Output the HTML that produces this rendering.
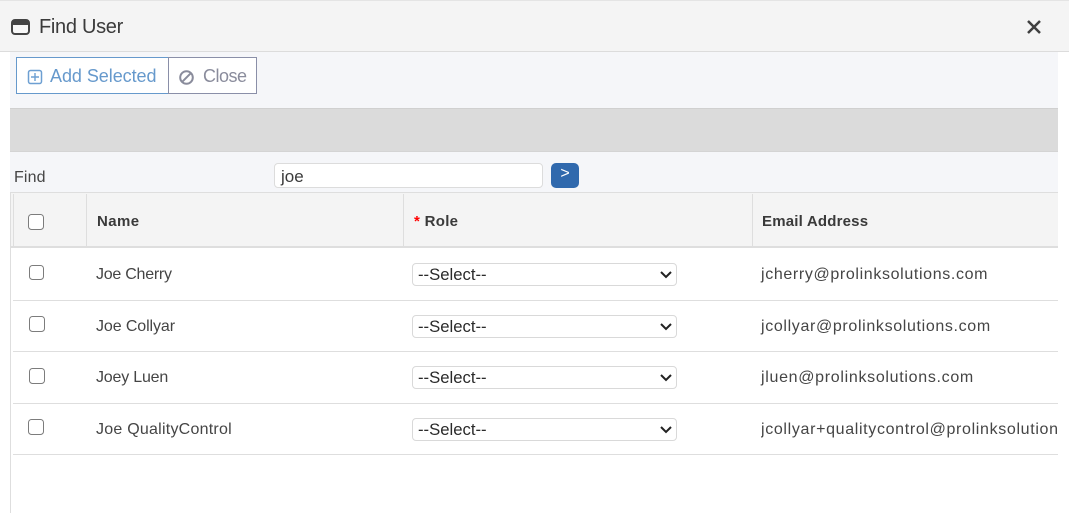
<!DOCTYPE html>
<html>
<head>
<meta charset="utf-8">
<style>
html,body{margin:0;padding:0;width:1069px;height:513px;overflow:hidden;background:#fff}
body{position:relative;font-family:"Liberation Sans",sans-serif;color:#3d3d3d}
.a{position:absolute;white-space:nowrap}
.t{font-size:16px;line-height:20px;color:#454545}
.b{font-size:15px;line-height:20px;font-weight:bold;color:#3a3a3a}
.cb{position:absolute;box-sizing:border-box;width:16px;height:16px;border:1.5px solid #7c7c7c;border-radius:3.5px;background:#fff}
.sel{position:absolute;left:412px;width:265px;height:23px;box-sizing:border-box;border:1px solid #d9d9d9;border-radius:4px;background:#fff;font-size:16.7px;line-height:22px;color:#2a2a2a;padding-left:5px}
.sel svg{position:absolute;right:3px;top:6px}
.line{position:absolute;left:13px;width:1045px;height:1px;background:#dedede}
</style>
</head>
<body>
<div class="a" style="left:0;top:0;width:1069px;height:52px;box-sizing:border-box;background:#f4f4f4;border-top:1px solid #e4e4e4;border-bottom:1px solid #dcdcdc"></div>
<svg class="a" style="left:11px;top:19px" width="19" height="16" viewBox="0 0 19 16"><rect x="1" y="1" width="17" height="14" rx="3" fill="#f8f8f8" stroke="#444" stroke-width="2"/><rect x="1" y="1" width="17" height="5" rx="1.5" fill="#444"/></svg>
<div class="a" style="left:39px;top:15px;font-size:20px;line-height:24px;color:#3b3b3b;letter-spacing:-.3px">Find User</div>
<svg class="a" style="left:1026px;top:19px" width="16" height="16" viewBox="0 0 16 16"><path d="M2 2L14 14M14 2L2 14" stroke="#3f3f3f" stroke-width="2.5" fill="none"/></svg>

<div class="a" style="left:10px;top:52px;width:1048px;height:56px;background:#f5f6f9"></div>
<div class="a" style="left:16px;top:57px;width:153px;height:37px;box-sizing:border-box;border:1px solid #6699cc;background:#fff"></div>
<div class="a" style="left:168px;top:57px;width:89px;height:37px;box-sizing:border-box;border:1px solid #8a8fa8;background:#fff"></div>
<svg class="a" style="left:27px;top:69px" width="16" height="16" viewBox="0 0 16 16"><rect x="1.5" y="1.5" width="13" height="13" rx="2" fill="none" stroke="#6d9fd2" stroke-width="1.5"/><path d="M8 4v8M4 8h8" stroke="#6d9fd2" stroke-width="1.4"/></svg>
<div class="a" style="left:50px;top:65px;font-size:18px;line-height:22px;color:#6699cc;letter-spacing:-.05px">Add Selected</div>
<svg class="a" style="left:178px;top:69px" width="17" height="17" viewBox="0 0 17 17"><circle cx="8.5" cy="8.5" r="6.3" fill="none" stroke="#8a8c9c" stroke-width="2"/><path d="M4.2 12.8L12.8 4.2" stroke="#8a8c9c" stroke-width="2"/></svg>
<div class="a" style="left:203px;top:65px;font-size:18px;line-height:22px;color:#8a8c9c;letter-spacing:-.5px">Close</div>

<div class="a" style="left:10px;top:108px;width:1048px;height:44px;box-sizing:border-box;background:#dbdbdb;border-top:1px solid #d0d0d0;border-bottom:1px solid #d4d4d4"></div>
<div class="a" style="left:10px;top:152px;width:1048px;height:40px;background:#f5f6f9"></div>
<div class="a t" style="left:14px;top:168px;letter-spacing:.15px">Find</div>
<div class="a" style="left:274px;top:163px;width:269px;height:25px;box-sizing:border-box;border:1px solid #dcdcdc;border-radius:4px;background:#fff;font-size:17px;line-height:25px;padding-left:6px;color:#3a3a3a">joe</div>
<div class="a" style="left:551px;top:163px;width:28px;height:25px;border-radius:5px;background:#3069ad;color:#fff;font-size:16px;line-height:22px;text-align:center">&gt;</div>

<div class="a" style="left:11px;top:192px;width:1047px;height:56px;box-sizing:border-box;background:#f4f4f4;border-top:1px solid #dedede;border-bottom:2px solid #dedede"></div>
<div class="a" style="left:10px;top:192px;width:1px;height:321px;background:#dedede"></div>
<div class="a" style="left:13px;top:194px;width:1px;height:52px;background:#dedede"></div>
<div class="a" style="left:86px;top:194px;width:1px;height:52px;background:#dedede"></div>
<div class="a" style="left:403px;top:194px;width:1px;height:52px;background:#dedede"></div>
<div class="a" style="left:752px;top:194px;width:1px;height:52px;background:#dedede"></div>
<div class="cb" style="left:28px;top:214px"></div>
<div class="a b" style="left:97px;top:212px;letter-spacing:.4px">Name</div>
<div class="a b" style="left:414px;top:212px;letter-spacing:.3px"><span style="color:#f00">*</span> Role</div>
<div class="a b" style="left:762px;top:212px;letter-spacing:.2px">Email Address</div>

<div class="line" style="top:300px"></div>
<div class="line" style="top:351px"></div>
<div class="line" style="top:403px"></div>
<div class="line" style="top:454px"></div>

<div class="cb" style="left:29px;top:265px;width:15px;height:15px"></div>
<div class="a t" style="left:96px;top:265px;letter-spacing:-.25px">Joe Cherry</div>
<div class="sel" style="top:263px">--Select--<svg width="14" height="10" viewBox="0 0 14 10"><path d="M2 2l5 5 5-5" stroke="#222" stroke-width="2" fill="none"/></svg></div>
<div class="a t" style="left:761px;top:265px;letter-spacing:.64px">jcherry@prolinksolutions.com</div>

<div class="cb" style="left:29px;top:316px"></div>
<div class="a t" style="left:96px;top:317px;letter-spacing:-.1px">Joe Collyar</div>
<div class="sel" style="top:315px">--Select--<svg width="14" height="10" viewBox="0 0 14 10"><path d="M2 2l5 5 5-5" stroke="#222" stroke-width="2" fill="none"/></svg></div>
<div class="a t" style="left:761px;top:317px;letter-spacing:.65px">jcollyar@prolinksolutions.com</div>

<div class="cb" style="left:29px;top:368px"></div>
<div class="a t" style="left:96px;top:368px;letter-spacing:-.2px">Joey Luen</div>
<div class="sel" style="top:366px">--Select--<svg width="14" height="10" viewBox="0 0 14 10"><path d="M2 2l5 5 5-5" stroke="#222" stroke-width="2" fill="none"/></svg></div>
<div class="a t" style="left:761px;top:368px;letter-spacing:.69px">jluen@prolinksolutions.com</div>

<div class="cb" style="left:28px;top:419px"></div>
<div class="a t" style="left:96px;top:420px;letter-spacing:.24px">Joe QualityControl</div>
<div class="sel" style="top:418px">--Select--<svg width="14" height="10" viewBox="0 0 14 10"><path d="M2 2l5 5 5-5" stroke="#222" stroke-width="2" fill="none"/></svg></div>
<div class="a t" style="left:761px;top:420px;width:297px;overflow:hidden;letter-spacing:.66px">jcollyar+qualitycontrol@prolinksolutions.com</div>
</body>
</html>
